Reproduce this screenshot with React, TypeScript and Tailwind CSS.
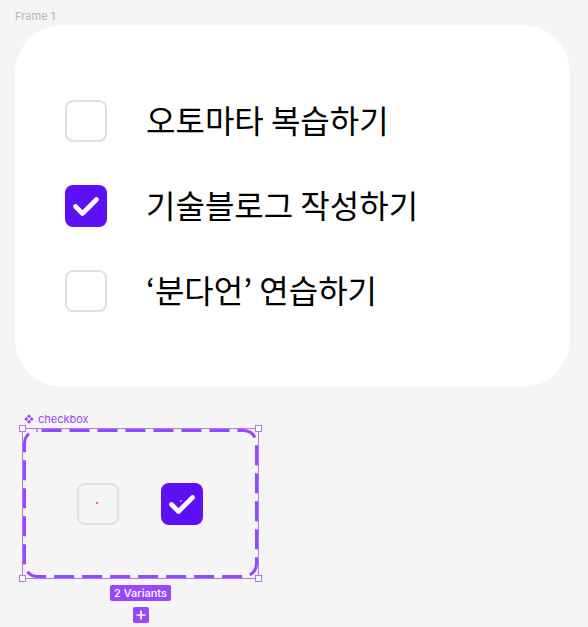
import React from 'react';

const Check = () => (
    <svg width="42" height="42" viewBox="0 0 42 42" fill="none">
        <path d="M10.5 21.5 L17.5 28.5 L31.5 14.5" stroke="white" strokeWidth="4.6" strokeLinecap="round" strokeLinejoin="round" />
    </svg>
);

const Box: React.FC<{ checked?: boolean; dot?: boolean }> = ({ checked, dot }) => {
    if (checked) {
        return (
            <div className="relative w-[42px] h-[42px] rounded-[8px] bg-[#5b10f6] flex-none">
                <Check />
                {dot && <div className="absolute left-[19px] top-[17px] w-[2px] h-[2px] bg-[#ff4fd8]" />}
            </div>
        );
    }
    return (
        <div className="relative w-[42px] h-[42px] rounded-[8px] border-[2.5px] border-[#e1e1e1] flex-none">
            {dot && <div className="absolute left-[17px] top-[17px] w-[2px] h-[2px] bg-[#ff4fd8]" />}
        </div>
    );
};

const todos = [
    { label: '오토마타 복습하기', done: false },
    { label: '기술블로그 작성하기', done: true },
    { label: '‘분다언’ 연습하기', done: false },
];

const Handle: React.FC<{ className: string }> = ({ className }) => (
    <div className={`absolute w-[7px] h-[7px] bg-white border border-[#a879ff] ${className}`} />
);

const ComponentIcon = () => (
    <svg width="10" height="10" viewBox="0 0 10 10" fill="#9747ff">
        <path d="M5 0.3 L7 2.3 L5 4.3 L3 2.3 Z" />
        <path d="M5 5.7 L7 7.7 L5 9.7 L3 7.7 Z" />
        <path d="M2.3 3 L4.3 5 L2.3 7 L0.3 5 Z" />
        <path d="M7.7 3 L9.7 5 L7.7 7 L5.7 5 Z" />
    </svg>
);

export default function App() {
    return (
        <div className="w-[588px] h-[627px] bg-[#f5f5f5] overflow-hidden font-['Inter',sans-serif]">
            <div className="pl-[15px] pt-[10px] h-[25px] text-[11px] leading-[13px] text-[#b4b4b4]">Frame 1</div>

            {/* frame card */}
            <div className="ml-[15px] w-[555px] h-[362px] rounded-[48px] bg-white pl-[50px] pt-[75px] flex flex-col gap-[43px]">
                {todos.map((t) => (
                    <div key={t.label} className="flex items-center gap-[39px] h-[42px]">
                        <Box checked={t.done} />
                        <span className="mb-[4px] text-[32px] leading-none text-black font-['Noto_Sans_CJK_KR',sans-serif]">{t.label}</span>
                    </div>
                ))}
            </div>

            {/* component set */}
            <div className="ml-[24px] mt-[25px] h-[14px] flex items-center gap-[4px] text-[11px] text-[#9747ff]">
                <ComponentIcon />
                <span>checkbox</span>
            </div>
            <div className="ml-[22px] mt-[2px] w-[237px] flex flex-col items-center">
                <div className="relative w-[237px] h-[151px] border border-[#a879ff] flex items-center pl-[54px] gap-[42px]">
                    <svg className="absolute left-[0px] top-[0px]" width="235" height="149" viewBox="0 0 235 149" fill="none">
                        <rect x="1.5" y="1.5" width="232" height="146" rx="13" stroke="#9747ff" strokeWidth="3" strokeDasharray="20 8" strokeDashoffset="-4" />
                    </svg>
                    <Box dot />
                    <Box checked dot />
                    <Handle className="-left-[4px] -top-[4px]" />
                    <Handle className="-right-[4px] -top-[4px]" />
                    <Handle className="-left-[4px] -bottom-[4px]" />
                    <Handle className="-right-[4px] -bottom-[4px]" />
                </div>
                <div className="mt-[6px] h-[16px] px-[4px] rounded-[2px] bg-[#9747ff] text-white text-[11px] font-medium leading-[16px]">2 Variants</div>
                <div className="mt-[6px] w-[16px] h-[16px] rounded-[2px] bg-[#9747ff] flex items-center justify-center">
                    <svg width="10" height="10" viewBox="0 0 10 10">
                        <path d="M5 0.5 V9.5 M0.5 5 H9.5" stroke="white" strokeWidth="1.6" />
                    </svg>
                </div>
            </div>
        </div>
    );
}
